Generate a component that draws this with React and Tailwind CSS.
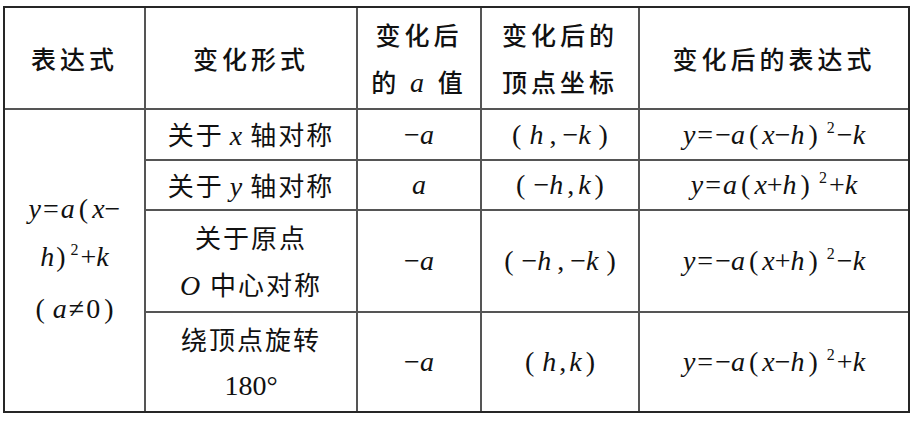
function V({ children }) {
  return <span className="font-[Liberation_Serif] italic">{children}</span>;
}

function P({ children }) {
  return <span className="font-[Liberation_Serif] not-italic mx-[4px]">{children}</span>;
}

function Sq() {
  return (
    <span className="font-[Liberation_Serif] text-[16px] not-italic ml-[5px] mr-[2px] relative -top-[11px]">2</span>
  );
}

function Eq() {
  return <span className="font-[Liberation_Serif] mx-[2px]">=</span>;
}

function Formula({ children }) {
  return (
    <div className="font-[Liberation_Serif] text-[28px] leading-none text-[#111] flex items-baseline justify-center">
      {children}
    </div>
  );
}

function Head({ lines }) {
  return (
    <div className="bg-white flex flex-col items-center justify-center font-[Noto_Sans_CJK_SC] text-[25px] tracking-[4px] font-medium text-[#111] leading-[47px]">
      {lines.map((l, i) => (
        <div key={i}>{l}</div>
      ))}
    </div>
  );
}

function Cell({ children }) {
  return <div className="bg-white flex flex-col items-center justify-center text-center">{children}</div>;
}

function Text({ children }) {
  return (
    <div className="font-[Noto_Sans_CJK_SC] text-[26px] tracking-[2px] leading-[47px] text-[#111] flex items-baseline">
      {children}
    </div>
  );
}

const minus = '\u2212';

export default function App() {
  return (
    <div className="bg-white w-[915px] h-[421px] overflow-hidden">
      <div className="ml-[3px] mt-[6px] inline-grid grid-cols-[139px_210px_122px_156px_268px] grid-rows-[100px_49px_48px_100px_98px] gap-[2px] bg-[#555] border-2 border-[#262626]">
        <Head lines={['表达式']} />
        <Head lines={['变化形式']} />
        <Head
          lines={[
            '变化后',
            <span key="a">
              的 <span className="font-[Liberation_Serif] italic font-normal text-[28px]">a</span> 值
            </span>,
          ]}
        />
        <Head lines={['变化后的', '顶点坐标']} />
        <Head lines={['变化后的表达式']} />

        <div className="row-span-4 bg-white flex flex-col items-center justify-center pb-[4px]">
          <div className="font-[Liberation_Serif] text-[28px] leading-[48px] text-[#111] flex flex-col items-center">
            <div className="flex items-baseline">
              <V>y</V>
              <Eq />
              <V>a</V>
              <P>(</P>
              <V>x</V>
              {minus}
            </div>
            <div className="flex items-baseline">
              <V>h</V>
              <span className="ml-[2px]">)</span>
              <Sq />
              +<V>k</V>
            </div>
            <div className="flex items-baseline">
              <span className="mr-[8px]">(</span>
              <V>a</V>
              <span className="mx-[2px]">≠</span>0<span className="ml-[4px]">)</span>
            </div>
          </div>
        </div>

        {/* row 1 */}
        <Cell>
          <Text>
            关于<span className="font-[Liberation_Serif] italic text-[28px] mx-[6px]">x</span>轴对称
          </Text>
        </Cell>
        <Cell>
          <Formula>
            {minus}
            <V>a</V>
          </Formula>
        </Cell>
        <Cell>
          <Formula>
            <P>(</P>
            <span className="ml-[4px]" />
            <V>h</V>
            <span className="mx-[6px]">,</span>
            {minus}
            <V>k</V>
            <span className="ml-[4px]" />
            <P>)</P>
          </Formula>
        </Cell>
        <Cell>
          <Formula>
            <V>y</V>
            <Eq />
            {minus}
            <V>a</V>
            <P>(</P>
            <V>x</V>
            {minus}
            <V>h</V>
            <P>)</P>
            <Sq />
            {minus}
            <V>k</V>
          </Formula>
        </Cell>

        {/* row 2 */}
        <Cell>
          <Text>
            关于<span className="font-[Liberation_Serif] italic text-[28px] mx-[6px]">y</span>轴对称
          </Text>
        </Cell>
        <Cell>
          <Formula>
            <V>a</V>
          </Formula>
        </Cell>
        <Cell>
          <Formula>
            <P>(</P>
            <span className="ml-[4px]" />
            {minus}
            <V>h</V>
            <span className="mx-[4px]">,</span>
            <V>k</V>
            <P>)</P>
          </Formula>
        </Cell>
        <Cell>
          <Formula>
            <V>y</V>
            <Eq />
            <V>a</V>
            <P>(</P>
            <V>x</V>+<V>h</V>
            <P>)</P>
            <Sq />
            +<V>k</V>
          </Formula>
        </Cell>

        {/* row 3 */}
        <Cell>
          <Text>关于原点</Text>
          <Text>
            <span className="font-[Liberation_Serif] italic text-[28px] mr-[8px]">O</span>中心对称
          </Text>
        </Cell>
        <Cell>
          <Formula>
            {minus}
            <V>a</V>
          </Formula>
        </Cell>
        <Cell>
          <Formula>
            <P>(</P>
            <span className="ml-[4px]" />
            {minus}
            <V>h</V>
            <span className="mx-[6px]">,</span>
            {minus}
            <V>k</V>
            <span className="ml-[4px]" />
            <P>)</P>
          </Formula>
        </Cell>
        <Cell>
          <Formula>
            <V>y</V>
            <Eq />
            {minus}
            <V>a</V>
            <P>(</P>
            <V>x</V>+<V>h</V>
            <P>)</P>
            <Sq />
            {minus}
            <V>k</V>
          </Formula>
        </Cell>

        {/* row 4 */}
        <Cell>
          <Text>绕顶点旋转</Text>
          <div className="font-[Liberation_Serif] text-[28px] leading-[47px] text-[#111]">180°</div>
        </Cell>
        <Cell>
          <Formula>
            {minus}
            <V>a</V>
          </Formula>
        </Cell>
        <Cell>
          <Formula>
            <P>(</P>
            <span className="ml-[4px]" />
            <V>h</V>
            <span className="mx-[3px]">,</span>
            <V>k</V>
            <P>)</P>
          </Formula>
        </Cell>
        <Cell>
          <Formula>
            <V>y</V>
            <Eq />
            {minus}
            <V>a</V>
            <P>(</P>
            <V>x</V>
            {minus}
            <V>h</V>
            <P>)</P>
            <Sq />+<V>k</V>
          </Formula>
        </Cell>
      </div>
    </div>
  );
}
